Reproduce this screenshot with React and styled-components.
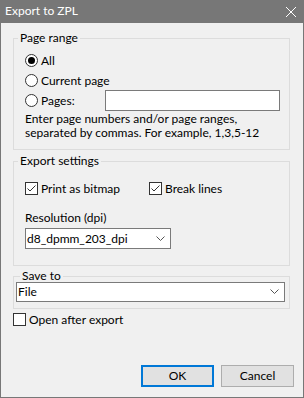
import React from 'react'
import styled, { createGlobalStyle } from 'styled-components'

const Global = createGlobalStyle`
    html, body {
        margin: 0;
        padding: 0;
        background: #f0f0f0;
    }
    * {
        box-sizing: border-box;
    }
`;

const Window = styled.div`
    width: 304px;
    height: 398px;
    display: flex;
    flex-direction: column;
    background: #f0f0f0;
    border: 1px solid #777777;
    border-top: none;
    font-family: Lato, "Noto Sans", sans-serif;
    font-size: 12px;
    color: #000;
`;

const TitleBar = styled.div`
    height: 23px;
    flex: none;
    display: flex;
    align-items: center;
    justify-content: space-between;
    background: #777777;
    margin: 0 -1px;
    padding: 0 7px 0 5px;
`;

const Title = styled.span`
    color: #fff;
    font-size: 12px;
    line-height: 16px;
    padding-bottom: 1px;
`;

const CloseIcon = () => (
    <svg width="12" height="12" viewBox="0 0 12 12">
        <path d="M1 1 L11 11 M11 1 L1 11" stroke="#fff" strokeWidth="1" />
    </svg>
);

const Body = styled.div`
    flex: 1;
    display: flex;
    flex-direction: column;
    padding: 9px 9px 10px 12px;
`;

const Group = styled.fieldset`
    margin: ${p => p.$top || 0}px 4px 0 0;
    min-width: 0;
    border: 1px solid #dcdcdc;
    padding: ${p => p.$pad};
    display: flex;
    flex-direction: column;
`;

const Legend = styled.legend`
    padding: 0 2px;
    margin-left: ${p => p.$shift || 0}px;
    line-height: 12px;
    height: 12px;
`;

const Row = styled.label`
    height: 20px;
    display: flex;
    align-items: center;
    gap: 3px;
    white-space: nowrap;
`;

const RadioCircle = styled.span`
    width: 13px;
    height: 13px;
    flex: none;
    border: 1px solid #333;
    border-radius: 50%;
    background: #fff;
    display: flex;
    align-items: center;
    justify-content: center;
    &::after {
        content: "";
        width: 7px;
        height: 7px;
        border-radius: 50%;
        background: ${p => (p.$on ? '#000' : 'transparent')};
    }
`;

const Box = styled.span`
    width: 13px;
    height: 13px;
    flex: none;
    border: 1px solid #333;
    background: #fff;
    display: flex;
`;

const Check = ({ on }) => (
    <Box>
        {on && (
            <svg width="11" height="11" viewBox="0 0 11 11">
                <path d="M1.5 5.5 L4 8 L9.5 2.5" fill="none" stroke="#333" strokeWidth="1" />
            </svg>
        )}
    </Box>
);

const TextInput = styled.div`
    width: 175px;
    height: 21px;
    margin-left: auto;
    background: #fff;
    border: 1px solid #7a7a7a;
`;

const Help = styled.p`
    margin: 2px 0 0 0;
    line-height: 14px;
    white-space: nowrap;
`;

const CheckGrid = styled.div`
    display: grid;
    grid-template-columns: 124px auto;
    justify-content: start;
`;

const FieldLabel = styled.div`
    margin-top: 12px;
    line-height: 16px;
`;

const Select = styled.div`
    width: ${p => p.$w}px;
    height: ${p => p.$h}px;
    margin-top: ${p => p.$top || 0}px;
    background: #fff;
    border: 1px solid #7a7a7a;
    display: flex;
    align-items: center;
    justify-content: space-between;
    padding: 0 5px 1px 1px;
`;

const Chevron = () => (
    <svg width="9" height="5" viewBox="0 0 9 5">
        <path d="M0.5 0.5 L4.5 4.5 L8.5 0.5" fill="none" stroke="#555" strokeWidth="1" />
    </svg>
);

const Buttons = styled.div`
    margin-top: auto;
    display: flex;
    justify-content: flex-end;
    gap: 7px;
`;

const Button = styled.button`
    width: 73px;
    height: 22px;
    padding: 0 0 1px 0;
    font: inherit;
    color: #000;
    background: #e1e1e1;
    border: ${p => (p.$primary ? '2px solid #0078d7' : '1px solid #adadad')};
`;

export default () => {
    return (
        <Window>
            <Global />
            <TitleBar>
                <Title>Export to ZPL</Title>
                <CloseIcon />
            </TitleBar>
            <Body>
                <Group $pad="6px 9px 9px 11px">
                    <Legend $shift={-7}>Page range</Legend>
                    <Row><RadioCircle $on />All</Row>
                    <Row><RadioCircle />Current page</Row>
                    <Row><RadioCircle />Pages:<TextInput /></Row>
                    <Help>
                        Enter page numbers and/or page ranges,<br />
                        separated by commas. For example, 1,3,5-12
                    </Help>
                </Group>
                <Group $top={5} $pad="11px 9px 16px 11px">
                    <Legend $shift={-7}>Export settings</Legend>
                    <CheckGrid>
                        <Row><Check on />Print as bitmap</Row>
                        <Row><Check on />Break lines</Row>
                    </CheckGrid>
                    <FieldLabel>Resolution (dpi)</FieldLabel>
                    <Select $w={146} $h={21} $top={2}>
                        d8_dpmm_203_dpi
                        <Chevron />
                    </Select>
                </Group>
                <Group $top={4} $pad="0 4px 6px 2px">
                    <Legend $shift={4}>Save to</Legend>
                    <Select $w={269} $h={20}>
                        File
                        <Chevron />
                    </Select>
                </Group>
                <Row><Check />Open after export</Row>
                <Buttons>
                    <Button $primary>OK</Button>
                    <Button>Cancel</Button>
                </Buttons>
            </Body>
        </Window>
    )
}
